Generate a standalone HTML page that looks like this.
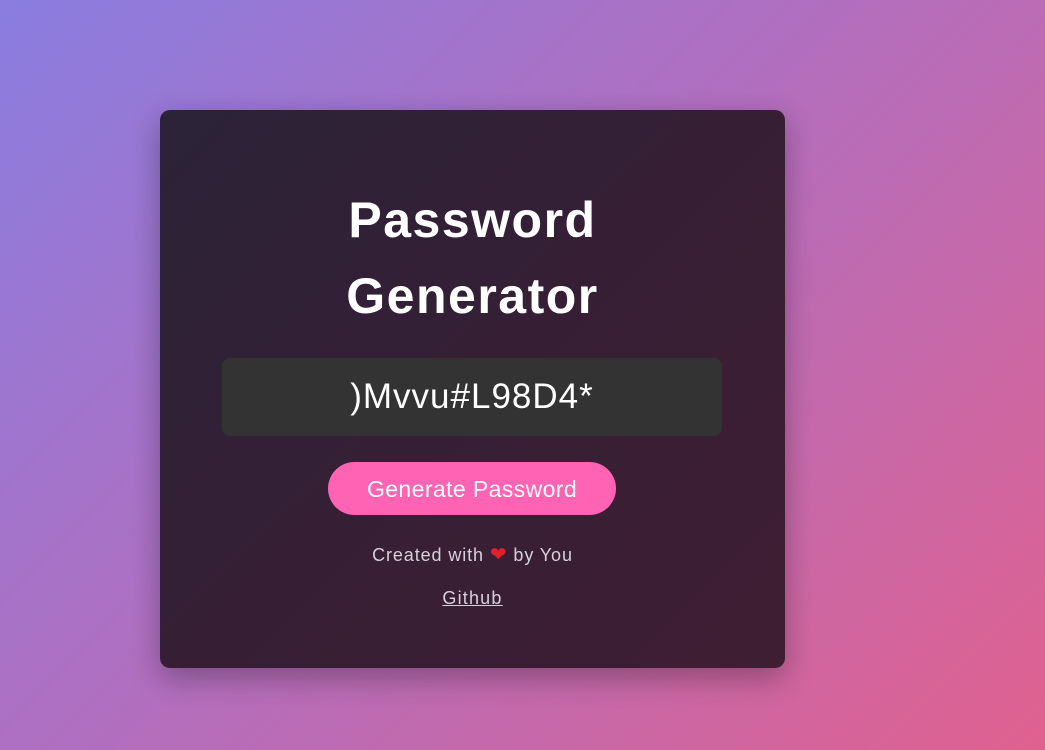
<!DOCTYPE html>
<html><head><style>
html,body{margin:0;width:1045px;height:750px;overflow:hidden}
body{background:linear-gradient(135deg,#8a7de0 0%,#b06fc0 45%,#e0618f 100%);font-family:"Liberation Sans",sans-serif;position:relative}
.card{position:absolute;left:160px;top:110px;width:625px;height:558px;border-radius:10px;background:linear-gradient(135deg,#2b2338 0%,#361f35 50%,#3f1e33 100%);box-shadow:0 10px 30px rgba(0,0,0,.3);text-align:center}
h1{margin:0;position:absolute;left:0;right:0;top:72px;color:#fff;font-size:50px;font-weight:bold;line-height:76px;letter-spacing:1.5px}
.pw{position:absolute;left:62px;top:248px;width:500px;height:78px;background:#333;border-radius:8px;color:#fff;font-size:35px;line-height:78px;letter-spacing:1px}
.btn{position:absolute;left:168px;top:352px;width:288px;height:53px;border-radius:27px;background:#ff63b3;color:#fff;font-size:23px;line-height:55px;letter-spacing:.4px}
.c{position:absolute;left:0;right:0;top:432px;color:#d8d0dc;font-size:18px;letter-spacing:.9px}
.g{position:absolute;left:0;right:0;top:478px;color:#d8d0dc;font-size:18px;text-decoration:underline;letter-spacing:1.2px}
</style></head><body>
<div class="card">
<h1>Password<br>Generator</h1>
<div class="pw">)Mvvu#L98D4*</div>
<div class="btn">Generate Password</div>
<div class="c">Created with <span style="color:#e0202a;font-size:20px">❤</span> by You</div>
<div class="g">Github</div>
</div>
</body></html>
